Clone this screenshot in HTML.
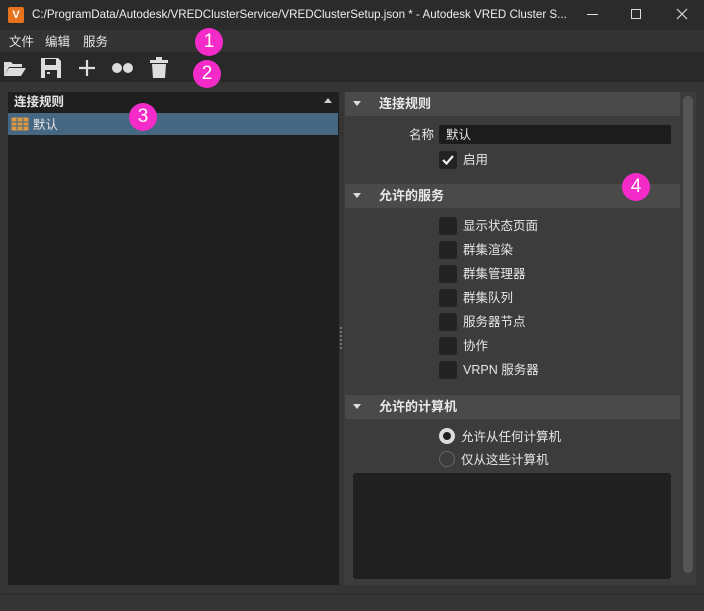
<!DOCTYPE html>
<html><head><meta charset="utf-8"><style>
*{margin:0;padding:0;box-sizing:border-box}
body{width:704px;height:611px;background:#353535;font-family:"Liberation Sans","Noto Sans CJK SC",sans-serif;font-size:12px;line-height:1.3;color:#e6e6e6;position:relative;overflow:hidden}
.abs{position:absolute}
.title{left:0;top:0;width:704px;height:30px;background:#2b2b2b}
.menu{left:0;top:30px;width:704px;height:22px;background:#333}
.tb{left:0;top:52px;width:704px;height:30px;background:#292929}
.badge{width:28px;height:28px;border-radius:50%;background:#f52bc9;color:#fff;font-size:19px;text-align:center;line-height:28px;z-index:5}
.hdr{background:#4a4a4a;height:24px;font-weight:bold;font-size:13px;line-height:24px;color:#e8e8e8}
.cb{width:18px;height:18px;background:#222;border-radius:3px}
.lbl{font-size:12.5px}
</style></head><body>
<div class="abs title"></div>
<div class="abs" style="left:8px;top:7px;width:16px;height:16px;background:#e8731e;border-radius:2px;color:#fff;font-size:11px;font-weight:bold;text-align:center;line-height:16px">V</div>
<div class="abs" style="left:32px;top:7px;font-size:11.6px;color:#eee;white-space:nowrap">C:/ProgramData/Autodesk/VREDClusterService/VREDClusterSetup.json * - Autodesk VRED Cluster S...</div>
<div class="abs" style="left:587px;top:14px;width:11px;height:1px;background:#ddd"></div>
<div class="abs" style="left:631px;top:9px;width:10px;height:10px;border:1px solid #ddd"></div>
<svg class="abs" style="left:676px;top:8px" width="12" height="12"><path d="M1 1L11 11M11 1L1 11" stroke="#ddd" stroke-width="1.2"/></svg>
<div class="abs menu"></div>
<div class="abs" style="left:9px;top:34px;font-size:12.5px">文件</div>
<div class="abs" style="left:45px;top:34px;font-size:12.5px">编辑</div>
<div class="abs" style="left:83px;top:34px;font-size:12.5px">服务</div>
<div class="abs tb"></div>
<svg class="abs" style="left:3px;top:58px" width="24" height="20"><path d="M1 4h7l2 2h9v3H6L1 18z" fill="#ddd"/><path d="M6 10h17l-5 8H1z" fill="#ddd"/></svg>
<svg class="abs" style="left:40px;top:57px" width="22" height="22"><path d="M1 1h17l3 3v17H1z" fill="#ddd"/><rect x="5" y="2" width="11" height="6" fill="#292929"/><rect x="5" y="13" width="12" height="8" fill="#292929"/><rect x="7" y="15" width="3" height="2" fill="#ddd"/></svg>
<svg class="abs" style="left:78px;top:59px" width="18" height="18"><path d="M9 1v16M1 9h16" stroke="#ddd" stroke-width="2.2"/></svg>
<div class="abs" style="left:112px;top:63px;width:10px;height:10px;border-radius:50%;background:#ddd"></div>
<div class="abs" style="left:123px;top:63px;width:10px;height:10px;border-radius:50%;background:#ddd"></div>
<svg class="abs" style="left:149px;top:57px" width="20" height="22"><rect x="1" y="3" width="18" height="3" fill="#ddd"/><rect x="7" y="0" width="6" height="3" fill="#ddd"/><path d="M3 7h14l-1 14H4z" fill="#ddd"/></svg>
<div class="abs" style="left:8px;top:92px;width:331px;height:493px;background:#1f1f1f"></div>
<div class="abs" style="left:14px;top:94px;font-weight:bold;font-size:12.5px">连接规则</div>
<div class="abs" style="left:324px;top:98px;width:0;height:0;border-left:4px solid transparent;border-right:4px solid transparent;border-bottom:5px solid #ccc"></div>
<div class="abs" style="left:8px;top:113px;width:330px;height:22px;background:#466781"></div>
<svg class="abs" style="left:11px;top:117px" width="18" height="14"><rect x="0.5" y="0.5" width="17" height="13" fill="#d89a46"/><path d="M1 5h16M1 9h16M6 1v12M12 1v12" stroke="#466781" stroke-width="1"/></svg>
<div class="abs" style="left:33px;top:117px;font-size:12.5px">默认</div>
<div class="abs" style="left:340px;top:327px;width:2px;height:22px;border-left:2px dotted #777"></div>
<div class="abs" style="left:344px;top:92px;width:352px;height:493px;background:#3c3c3c"></div>
<div class="abs" style="left:683px;top:96px;width:10px;height:477px;background:#555;border-radius:5px"></div>
<div class="abs hdr" style="left:345px;top:92px;width:335px"><span style="position:absolute;left:8px;top:9px;border-left:4px solid transparent;border-right:4px solid transparent;border-top:5px solid #ddd"></span><span style="position:absolute;left:34px">连接规则</span></div>
<div class="abs lbl" style="left:409px;top:127px">名称</div>
<div class="abs" style="left:439px;top:125px;width:232px;height:19px;background:#1c1c1c;border-radius:2px"></div>
<div class="abs lbl" style="left:446px;top:127px">默认</div>
<div class="abs cb" style="left:439px;top:151px"></div>
<svg class="abs" style="left:441px;top:153px" width="14" height="14"><path d="M2 7l3.5 3.5L12 3" stroke="#eee" stroke-width="2.2" fill="none"/></svg>
<div class="abs lbl" style="left:463px;top:152px">启用</div>
<div class="abs hdr" style="left:345px;top:184px;width:335px"><span style="position:absolute;left:8px;top:9px;border-left:4px solid transparent;border-right:4px solid transparent;border-top:5px solid #ddd"></span><span style="position:absolute;left:34px">允许的服务</span></div>
<div class="abs cb" style="left:439px;top:217px"></div><div class="abs lbl" style="left:463px;top:218px">显示状态页面</div>
<div class="abs cb" style="left:439px;top:241px"></div><div class="abs lbl" style="left:463px;top:242px">群集渲染</div>
<div class="abs cb" style="left:439px;top:265px"></div><div class="abs lbl" style="left:463px;top:266px">群集管理器</div>
<div class="abs cb" style="left:439px;top:289px"></div><div class="abs lbl" style="left:463px;top:290px">群集队列</div>
<div class="abs cb" style="left:439px;top:313px"></div><div class="abs lbl" style="left:463px;top:314px">服务器节点</div>
<div class="abs cb" style="left:439px;top:337px"></div><div class="abs lbl" style="left:463px;top:338px">协作</div>
<div class="abs cb" style="left:439px;top:361px"></div><div class="abs lbl" style="left:463px;top:362px">VRPN 服务器</div>
<div class="abs hdr" style="left:345px;top:395px;width:335px"><span style="position:absolute;left:8px;top:9px;border-left:4px solid transparent;border-right:4px solid transparent;border-top:5px solid #ddd"></span><span style="position:absolute;left:34px">允许的计算机</span></div>
<div class="abs" style="left:439px;top:428px;width:16px;height:16px;border-radius:50%;background:#ddd"></div>
<div class="abs" style="left:443px;top:432px;width:8px;height:8px;border-radius:50%;background:#222"></div>
<div class="abs lbl" style="left:461px;top:429px">允许从任何计算机</div>
<div class="abs" style="left:439px;top:451px;width:16px;height:16px;border-radius:50%;border:1px solid #666"></div>
<div class="abs lbl" style="left:461px;top:452px">仅从这些计算机</div>
<div class="abs" style="left:353px;top:473px;width:318px;height:106px;background:#202020;border-radius:3px"></div>
<div class="abs" style="left:0;top:594px;width:704px;height:1px;background:#2a2a2a"></div>
<div class="abs badge" style="left:195px;top:28px">1</div>
<div class="abs badge" style="left:193px;top:60px">2</div>
<div class="abs badge" style="left:129px;top:103px">3</div>
<div class="abs badge" style="left:622px;top:173px">4</div>
</body></html>
